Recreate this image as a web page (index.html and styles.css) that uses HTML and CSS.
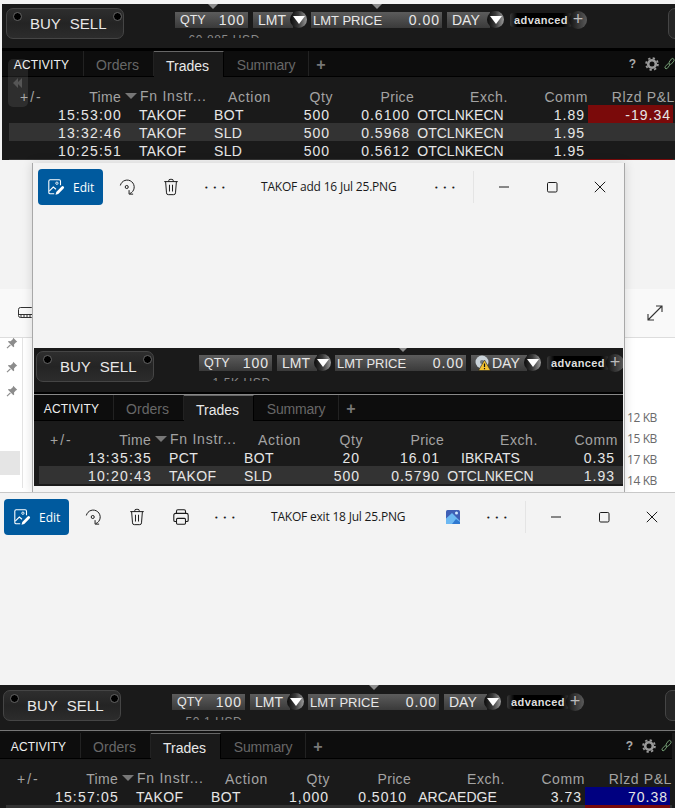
FILE: index.html
```html
<!DOCTYPE html>
<html lang="en">
<head>
<meta charset="utf-8">
<title>TAKOF trades</title>
<link rel="stylesheet" href="styles.css">
</head>
<body>
<svg class="defs" width="0" height="0" aria-hidden="true">
  <symbol id="i-edit" viewBox="0 0 20 20">
    <path d="M8 17.5H3.5a1.5 1.5 0 0 1-1.5-1.500V3.500A1.500 1.500 0 0 1 3.500 2h10A1.500 1.500 0 0 1 15 3.500V8" fill="none" stroke="currentColor" stroke-width="1.200"/>
    <path d="M2.500 14.500 7 10l3 2.500" fill="none" stroke="currentColor" stroke-width="1.200"/>
    <circle cx="11" cy="5.800" r="1.300" fill="none" stroke="currentColor" stroke-width="1"/>
    <path d="M9.500 18.500l.8-3 6-6a1.500 1.500 0 0 1 2.200 2.200l-6 6z" fill="currentColor"/>
  </symbol>
  <symbol id="i-rotate" viewBox="0 0 20 20">
    <path d="M2.600 8.300A7.800 7.800 0 1 1 13.200 17.300" fill="none" stroke="currentColor" stroke-width="1.100"/>
    <path d="M12.300 13.500v4.400h4.500" fill="none" stroke="currentColor" stroke-width="1.100"/>
    <circle cx="9.700" cy="10" r="1.700" fill="none" stroke="currentColor" stroke-width="1.100"/>
  </symbol>
  <symbol id="i-trash" viewBox="0 0 20 20">
    <path d="M2.500 4h15M7.500 4V3a1.500 1.500 0 0 1 1.500-1.500h2A1.500 1.500 0 0 1 12.500 3v1M4 4l1 12.500A2 2 0 0 0 7 18.500h6a2 2 0 0 0 2-2L16 4M8.300 7.500v7.500M11.700 7.500v7.500" fill="none" stroke="currentColor" stroke-width="1.100"/>
  </symbol>
  <symbol id="i-print" viewBox="0 0 20 20">
    <path d="M5 6V3.500A1.500 1.500 0 0 1 6.500 2h7A1.500 1.500 0 0 1 15 3.500V6M5 15H3.500A1.500 1.500 0 0 1 2 13.500V8a2 2 0 0 1 2-2h12a2 2 0 0 1 2 2v5.500a1.500 1.500 0 0 1-1.500 1.500H15" fill="none" stroke="currentColor" stroke-width="1.200"/>
    <rect x="5" y="11.500" width="10" height="6.500" rx="1.200" fill="none" stroke="currentColor" stroke-width="1.200"/>
  </symbol>
  <symbol id="i-min" viewBox="0 0 12 12"><path d="M1 6h10" stroke="currentColor" stroke-width="1"/></symbol>
  <symbol id="i-max" viewBox="0 0 12 12"><rect x="1.500" y="1.500" width="9.500" height="9.500" rx="1.200" fill="none" stroke="currentColor" stroke-width="1"/></symbol>
  <symbol id="i-close" viewBox="0 0 12 12"><path d="M.8.800l10.400 10.400M11.200.800.800 11.200" stroke="currentColor" stroke-width="1"/></symbol>
  <symbol id="i-gear" viewBox="0 0 14 14">
    <circle cx="7" cy="7" r="3.800" fill="none" stroke="#9a9a9a" stroke-width="2.600"/>
    <circle cx="7" cy="7" r="5.900" fill="none" stroke="#9a9a9a" stroke-width="1.800" stroke-dasharray="2.300 2.330"/>
  </symbol>
  <symbol id="i-link" viewBox="0 0 14 18">
    <path d="M1.500 12.500l2.500-3a2 2 0 0 1 3 0l.5.600-3.300 4.400a2 2 0 0 1-3-.4zM6.500 6.500l3-4a2 2 0 0 1 3 .4 2 2 0 0 1 0 2.400l-3 3.600a2 2 0 0 1-3-.4z" fill="none" stroke="#7fae7f" stroke-width="1.100"/>
  </symbol>
  <symbol id="i-pin" viewBox="0 0 12 12">
    <path d="M7.200.8 11.200 4.800 9.800 5.400 8 7.600 8.200 9.600 7.400 10.200 2 4.800 2.600 4 4.600 4.200 6.800 2.200z" fill="#8c8c8c"/>
    <path d="M4.400 7.800 1 11.200" stroke="#8c8c8c" stroke-width="1.200"/>
  </symbol>
</svg>

<main class="desk">
  <div class="backdrop">
    <div class="band band-grey"></div>
    <div class="band band-pale"></div>
    <div class="band band-white"></div>
  </div>

  <svg class="desk-icon keyboard" viewBox="0 0 16 12" aria-hidden="true"><rect x=".5" y=".5" width="15" height="10" rx="2" fill="none" stroke="#333"/><path d="M1 7.500h14M3 7.500v3M6 7.500v3M9 7.500v3M12 7.500v3" stroke="#333"/></svg>
  <svg class="desk-icon expand" viewBox="0 0 16 16" aria-hidden="true"><path d="M1 9v6h6M15 7V1H9M1 15 15 1" fill="none" stroke="#333" stroke-width="1.100"/></svg>
  <div class="side-line"></div>
  <div class="rule-line"></div>
  <svg class="pin pin-1"><use href="#i-pin"/></svg>
  <svg class="pin pin-2"><use href="#i-pin"/></svg>
  <svg class="pin pin-3"><use href="#i-pin"/></svg>
  <div class="selected-row"></div>
  <div class="sizes">
    <span>12 KB</span><span>15 KB</span><span>17 KB</span><span>14 KB</span>
  </div>

  <!-- Trading panel 1 -->
  <section class="panel panel-a">
    <div class="toolbar">
      <div class="buysell"><span class="dot"></span><span>BUY</span><span>SELL</span><span class="dot"></span></div>
      <div class="order">
        <div class="order-line">
          <div class="box box-qty"><span class="small">QTY</span><span class="num">100</span></div>
          <div class="box box-lmt">LMT<i class="drop"></i></div>
          <div class="box box-price"><span class="mid">LMT PRICE</span><span class="num">0.00</span></div>
          <div class="box box-day">DAY<i class="drop"></i></div>
          <div class="adv"><span>advanced</span><i class="adv-plus">+</i></div>
          <div class="side-btn"></div>
        </div>
        <div class="estimate"><span>~ 60,885 USD</span></div>
      </div>
      <i class="marker marker-1"></i><i class="marker marker-2"></i>
    </div>
    <div class="divider"></div>
    <div class="tabs">
      <div class="tab tab-title">ACTIVITY</div>
      <div class="tab tab-orders">Orders</div>
      <div class="tab tab-trades">Trades</div>
      <div class="tab tab-summary">Summary</div>
      <div class="tab tab-add">+</div>
      <div class="tools"><span class="help">?</span><svg class="gear"><use href="#i-gear"/></svg><svg class="link"><use href="#i-link"/></svg></div>
    </div>
    <div class="table">
      <div class="row head">
        <div class="c time"><span class="plusminus">+/-</span><span>Time</span></div>
        <div class="c fn"><i class="sort"></i>Fn Instr...</div>
        <div class="c act">Action</div><div class="c qty">Qty</div><div class="c price">Price</div>
        <div class="c exch">Exch.</div><div class="c comm">Comm</div><div class="c pnl">Rlzd P&amp;L</div>
      </div>
      <div class="row">
        <div class="c time"><span></span><span>15:53:00</span></div><div class="c fn">TAKOF</div><div class="c act">BOT</div><div class="c qty">500</div><div class="c price">0.6100</div><div class="c exch">OTCLNKECN</div><div class="c comm">1.89</div><div class="c pnl loss">-19.34</div>
      </div>
      <div class="row alt">
        <div class="c time"><span></span><span>13:32:46</span></div><div class="c fn">TAKOF</div><div class="c act">SLD</div><div class="c qty">500</div><div class="c price">0.5968</div><div class="c exch">OTCLNKECN</div><div class="c comm">1.95</div><div class="c pnl"></div>
      </div>
      <div class="row">
        <div class="c time"><span></span><span>10:25:51</span></div><div class="c fn">TAKOF</div><div class="c act">SLD</div><div class="c qty">500</div><div class="c price">0.5612</div><div class="c exch">OTCLNKECN</div><div class="c comm">1.95</div><div class="c pnl"></div>
      </div>
      <div class="row alt"><div class="c time"></div><div class="c fn"></div><div class="c act"></div><div class="c qty"></div><div class="c price"></div><div class="c exch"></div><div class="c comm"></div><div class="c pnl loss"></div></div>
    </div>
    <div class="collapse"><svg viewBox="0 0 10 12" aria-hidden="true"><path d="M6 1 1 6l5 5zM10 1 5 6l5 5z" fill="#555"/></svg></div>
  </section>

  <!-- Photos window 1 -->
  <section class="window window-a">
    <div class="win-bar">
      <button class="edit"><svg class="ico-edit"><use href="#i-edit"/></svg>Edit</button>
      <span class="ibtn"><svg class="ico"><use href="#i-rotate"/></svg></span>
      <span class="ibtn"><svg class="ico"><use href="#i-trash"/></svg></span>
      <span class="ibtn dots">&bull;&bull;&bull;</span>
      <span class="win-title">TAKOF add 16 Jul 25.PNG</span>
      <span class="ibtn dots">&bull;&bull;&bull;</span>
      <span class="win-sep"></span>
      <span class="cap"><svg class="ico-cap"><use href="#i-min"/></svg></span>
      <span class="cap"><svg class="ico-cap"><use href="#i-max"/></svg></span>
      <span class="cap"><svg class="ico-cap"><use href="#i-close"/></svg></span>
    </div>
  </section>

  <!-- Trading panel 2 -->
  <section class="panel panel-b">
    <div class="toolbar">
      <div class="buysell"><span class="dot"></span><span>BUY</span><span>SELL</span><span class="dot"></span></div>
      <div class="order">
        <div class="order-line">
          <div class="box box-qty"><span class="small">QTY</span><span class="num">100</span></div>
          <div class="box box-lmt">LMT<i class="drop"></i></div>
          <div class="box box-price"><span class="mid">LMT PRICE</span><span class="num">0.00</span></div>
          <div class="box box-day box-warn">
            <svg class="warn" viewBox="0 0 16 16" aria-hidden="true"><circle cx="7" cy="7" r="6.500" fill="#c9d2d8"/><circle cx="7" cy="7" r="2" fill="#6d7880"/><path d="M9.500 5 15.500 15.500H3.500z" fill="#f2c230" stroke="#222" stroke-width=".6"/><path d="M9.500 8.500v3.500M9.500 13v1.200" stroke="#111" stroke-width="1.200"/></svg>DAY<i class="drop"></i>
          </div>
          <div class="adv"><span>advanced</span><i class="adv-plus">+</i></div>
        </div>
        <div class="estimate"><span>~ 1.5K USD</span></div>
      </div>
      <i class="marker marker-2"></i>
    </div>
    <div class="divider"></div>
    <div class="tabs">
      <div class="tab tab-title">ACTIVITY</div>
      <div class="tab tab-orders">Orders</div>
      <div class="tab tab-trades">Trades</div>
      <div class="tab tab-summary">Summary</div>
      <div class="tab tab-add">+</div>
    </div>
    <div class="table">
      <div class="row head">
        <div class="c time"><span class="plusminus">+/-</span><span>Time</span></div>
        <div class="c fn"><i class="sort"></i>Fn Instr...</div>
        <div class="c act">Action</div><div class="c qty">Qty</div><div class="c price">Price</div>
        <div class="c exch">Exch.</div><div class="c comm">Comm</div><div class="c pnl"></div>
      </div>
      <div class="row">
        <div class="c time"><span></span><span>13:35:35</span></div><div class="c fn">PCT</div><div class="c act">BOT</div><div class="c qty">20</div><div class="c price">16.01</div><div class="c exch">IBKRATS</div><div class="c comm">0.35</div><div class="c pnl"></div>
      </div>
      <div class="row alt">
        <div class="c time"><span></span><span>10:20:43</span></div><div class="c fn">TAKOF</div><div class="c act">SLD</div><div class="c qty">500</div><div class="c price">0.5790</div><div class="c exch">OTCLNKECN</div><div class="c comm">1.93</div><div class="c pnl"></div>
      </div>
    </div>
  </section>

  <!-- Photos window 2 -->
  <section class="window window-b">
    <div class="win-bar">
      <button class="edit"><svg class="ico-edit"><use href="#i-edit"/></svg>Edit</button>
      <span class="ibtn"><svg class="ico"><use href="#i-rotate"/></svg></span>
      <span class="ibtn"><svg class="ico"><use href="#i-trash"/></svg></span>
      <span class="ibtn"><svg class="ico"><use href="#i-print"/></svg></span>
      <span class="ibtn dots">&bull;&bull;&bull;</span>
      <span class="win-title">TAKOF exit 18 Jul 25.PNG</span>
      <svg class="photo-badge" viewBox="0 0 14 14" aria-hidden="true">
        <rect width="14" height="14" rx="1.500" fill="#3f5fb5"/>
        <path d="M0 14V8.500L6 3l8 8v3z" fill="#6cb8f2"/>
        <path d="M6 14 10 9l4 3v2z" fill="#2f78d0"/>
        <circle cx="10.500" cy="3" r="1.500" fill="#cfe8ff"/>
      </svg>
      <span class="ibtn dots">&bull;&bull;&bull;</span>
      <span class="win-sep"></span>
      <span class="cap"><svg class="ico-cap"><use href="#i-min"/></svg></span>
      <span class="cap"><svg class="ico-cap"><use href="#i-max"/></svg></span>
      <span class="cap"><svg class="ico-cap"><use href="#i-close"/></svg></span>
    </div>
  </section>

  <!-- Trading panel 3 -->
  <section class="panel panel-c">
    <div class="toolbar">
      <div class="buysell"><span class="dot"></span><span>BUY</span><span>SELL</span><span class="dot"></span></div>
      <div class="order">
        <div class="order-line">
          <div class="box box-qty"><span class="small">QTY</span><span class="num">100</span></div>
          <div class="box box-lmt">LMT<i class="drop"></i></div>
          <div class="box box-price"><span class="mid">LMT PRICE</span><span class="num">0.00</span></div>
          <div class="box box-day">DAY<i class="drop"></i></div>
          <div class="adv"><span>advanced</span><i class="adv-plus">+</i></div>
          <div class="side-btn"></div>
        </div>
        <div class="estimate"><span>~ 50.1 USD</span></div>
      </div>
      <i class="marker marker-2"></i>
    </div>
    <div class="divider"></div>
    <div class="tabs">
      <div class="tab tab-title">ACTIVITY</div>
      <div class="tab tab-orders">Orders</div>
      <div class="tab tab-trades">Trades</div>
      <div class="tab tab-summary">Summary</div>
      <div class="tab tab-add">+</div>
      <div class="tools"><span class="help">?</span><svg class="gear"><use href="#i-gear"/></svg><svg class="link"><use href="#i-link"/></svg></div>
    </div>
    <div class="table">
      <div class="row head">
        <div class="c time"><span class="plusminus">+/-</span><span>Time</span></div>
        <div class="c fn"><i class="sort"></i>Fn Instr...</div>
        <div class="c act">Action</div><div class="c qty">Qty</div><div class="c price">Price</div>
        <div class="c exch">Exch.</div><div class="c comm">Comm</div><div class="c pnl">Rlzd P&amp;L</div>
      </div>
      <div class="row">
        <div class="c time"><span></span><span>15:57:05</span></div><div class="c fn">TAKOF</div><div class="c act">BOT</div><div class="c qty">1,000</div><div class="c price">0.5010</div><div class="c exch">ARCAEDGE</div><div class="c comm">3.73</div><div class="c pnl gain">70.38</div>
      </div>
      <div class="row alt"><div class="c time"></div><div class="c fn"></div><div class="c act"></div><div class="c qty"></div><div class="c price"></div><div class="c exch"></div><div class="c comm"></div><div class="c pnl loss"></div></div>
    </div>
  </section>
</main>
</body>
</html>
```

FILE: styles.css
```css
* { box-sizing: border-box; }
html, body { margin: 0; padding: 0; }
body { background: #f3f3f3; font-family: "Liberation Sans", Arial, sans-serif; }
.defs { position: absolute; }

.desk { position: relative; width: 675px; height: 811px; overflow: hidden; background: #f3f3f3; }

/* Backdrop desktop */
.backdrop { position: absolute; inset: 0; display: flex; flex-direction: column; }
.band-grey { height: 289px; background: #f3f3f3; }
.band-pale { height: 48px; background: #f9f9f9; }
.band-white { flex: 1; background: #fff; }
.rule-line { position: absolute; left: 0; top: 337px; width: 675px; height: 1px; background: #ddd; }
.side-line { position: absolute; left: 22px; top: 338px; width: 1px; height: 150px; background: #e4e4e4; }
.desk-icon { position: absolute; }
.keyboard { left: 18px; top: 307px; width: 16px; height: 12px; }
.expand { left: 647px; top: 305px; width: 16px; height: 16px; }
.pin { position: absolute; left: 6px; width: 12px; height: 12px; }
.pin-1 { top: 337px; }
.pin-2 { top: 361px; }
.pin-3 { top: 385px; }
.selected-row { position: absolute; left: 0; top: 451px; width: 20px; height: 24px; background: #e5e5e5; }
.sizes { position: absolute; left: 627px; top: 407px; display: flex; flex-direction: column; font: 12px/21px "Open Sans", sans-serif; color: #6a6a6a; letter-spacing: -.4px; }

/* Trading panels */
.panel { position: absolute; overflow: hidden; background: #1a1a1a; color: #e6e6e6; font-size: 14px; }
.panel-a { left: 2px; top: 4px; width: 673px; height: 156px; }
.panel-b { left: 34px; top: 348px; width: 589px; height: 138px; }
.panel-c { left: 0; top: 685px; width: 675px; height: 123px; }
.panel-b > * { margin-left: -2px; }
.panel-c > * { margin-left: -1px; }

.toolbar { position: relative; display: flex; align-items: flex-start; height: 44px; padding: 4px 0 0 4px; }
.panel-b .toolbar { height: 44px; padding-top: 3px; }
.panel-c .toolbar { height: 45px; padding-top: 5px; }

.buysell { flex: none; display: flex; align-items: center; width: 118px; height: 31px; padding: 0 0 0 6px; border: 1px solid #454545; border-radius: 7px; background: linear-gradient(#2e2e2e, #242424 50%, #2c2c2c); font-size: 15px; color: #e8e8e8; }
.buysell span:nth-child(2) { margin-left: 8px; }
.buysell span:nth-child(3) { margin-left: 9px; }
.buysell .dot { flex: none; width: 9px; height: 9px; margin-top: -14px; border-radius: 50%; background: #000; border: 1px solid #666; }
.buysell .dot:last-child { margin-left: 6px; }

.order { flex: none; margin-left: 51px; margin-top: 4px; }
.panel-b .order { margin-left: 45px; }
.order-line { display: flex; align-items: flex-start; height: 16px; }
.box { position: relative; display: flex; align-items: center; height: 16px; background: linear-gradient(#5c5c5c, #3a3a3a); color: #e8e8e8; white-space: nowrap; }
.small { font-size: 12.500px; }
.mid { font-size: 13px; }
.num { letter-spacing: 1px; }
.box-qty { width: 73px; padding: 0 3px 0 5px; justify-content: space-between; }
.box-lmt { width: 40px; margin-left: 5px; padding-left: 5px; }
.box-price { width: 131px; margin-left: 18px; padding: 0 2px; justify-content: space-between; }
.box-day { width: 43px; margin-left: 5px; padding-left: 5px; }
.box-warn { width: 56px; padding-left: 4px; }
.warn { width: 16px; height: 16px; flex: none; margin-right: 1px; }
.drop { position: absolute; right: -14px; top: -1px; width: 17px; height: 17px; border-radius: 50%; background: linear-gradient(90deg, #0c0c0c, #3a3a3a 50%, #9a9a9a); }
.drop::after { content: ""; position: absolute; left: 3px; top: 5px; border-left: 6px solid transparent; border-right: 6px solid transparent; border-top: 8px solid #fff; }
.adv { position: relative; display: flex; align-items: center; width: 62px; height: 14px; margin-top: 1px; margin-left: 20px; padding-left: 4px; border-radius: 3px; background: linear-gradient(90deg, #3a3a3a, #000 12%, #000 85%, #333); color: #ddd; font-size: 11px; font-weight: 700; letter-spacing: .4px; }
.adv-plus { position: absolute; right: -15px; top: -2px; width: 18px; height: 18px; border-radius: 50%; background: linear-gradient(90deg, #111, #5a5a5a); color: #bbb; font: 400 18px/17px "Liberation Sans", sans-serif; letter-spacing: 0; text-align: center; }
.side-btn { flex: none; width: 30px; height: 31px; margin: -4px 0 0 96px; border: 1px solid #454545; border-radius: 7px; background: #262626; }
.estimate { height: 5px; margin-top: 5px; padding-left: 2px; overflow: hidden; color: #8a8a8a; font-size: 12px; line-height: 14px; letter-spacing: .6px; }
.estimate span { display: block; margin-top: 0; }

.marker { position: absolute; top: 0; width: 0; height: 0; border-left: 5px solid transparent; border-right: 5px solid transparent; border-top: 5px solid #8c8c8c; }
.marker-1 { left: 206px; }
.marker-2 { left: 370px; }
.panel-b .marker-2 { left: 366px; top: -1px; }

.divider { height: 3px; background: #000; border-top: 1px solid #000; }
.panel-b .divider { height: 3px; border-bottom: 1px solid #888; }
.panel-c .divider { border-top: 1px solid #777; background: #111; }

.tabs { display: flex; height: 26px; background: #0d0d0d; border-bottom: 1px solid #000; width: 673px; }
.tab { display: flex; align-items: center; justify-content: center; height: 25px; padding: 2px 2px 0 0; border-right: 1px solid #222; color: #676767; }
.tab-title { width: 82px; color: #f0f0f0; font-size: 12px; letter-spacing: .2px; }
.tab-orders { width: 70px; }
.tab-trades { width: 70px; height: 26px; margin-bottom: -1px; background: #1a1a1a; color: #e8e8e8; border-top: 1px solid #666; border-right: 1px solid #000; }
.tab-summary { width: 85px; padding-right: 0; letter-spacing: -.2px; }
.tab-add { width: 24px; padding-right: 0; border-right: 0; font-weight: 700; font-size: 16px; color: #777; }
.tools { display: flex; align-items: center; height: 25px; margin-left: auto; }
.help { color: #aaa; font-size: 12px; font-weight: 700; margin-right: 9px; }
.gear { width: 14px; height: 14px; margin-right: 5px; }
.link { width: 11px; height: 16px; }

.table { padding-top: 10px; width: 673px; }
.panel-b .table { padding-top: 9px; }
.row { display: grid; grid-template-columns: 121px 91px 78px 41px 80px 95px 80px 85px 2px; height: 18px; line-height: 20px; letter-spacing: .35px; white-space: nowrap; }
.row.alt { background: #333; margin-left: 7px; padding-left: 0; grid-template-columns: 114px 91px 78px 41px 80px 95px 80px 85px 2px; }
.c { min-width: 0; height: 18px; }
.time { display: flex; justify-content: space-between; padding-right: 1px; letter-spacing: 1.200px; }
.head .time { padding-left: 18px; padding-right: 2px; letter-spacing: .3px; }
.plusminus { letter-spacing: 2px; }
.fn { padding-left: 16px; }
.head .fn { display: flex; align-items: center; padding-left: 2px; letter-spacing: .75px; }
.sort { flex: none; width: 0; height: 0; margin-right: 3px; border-left: 6px solid transparent; border-right: 6px solid transparent; border-top: 6px solid #777; }
.act { padding-left: 0; }
.head .act { padding-left: 14px; letter-spacing: .7px; }
.qty, .price, .comm, .pnl { text-align: right; padding-right: 3px; letter-spacing: 1px; }
.exch { text-align: center; letter-spacing: 0; }
.head .exch { text-align: right; padding-right: 0; letter-spacing: .6px; }
.head .qty, .head .comm { padding-right: 0; letter-spacing: .6px; }
.head .price { padding-right: 0; margin-right: -1px; letter-spacing: .3px; }
.head .pnl { padding-right: 0; margin-right: -2px; letter-spacing: .6px; }
.head { color: #a3a3a3; }
.pnl { padding-right: 2px; }
.loss { background: #7a0a0a; }
.gain { background: #000080; }

.collapse { position: absolute; left: 6px; top: 55px; display: flex; align-items: center; justify-content: center; width: 20px; height: 48px; border-radius: 5px; background: rgba(255,255,255,.09); }
.collapse svg { width: 10px; height: 12px; margin-right: 2px; }

/* Photo windows */
.window { position: absolute; background: #f3f3f3; color: #1a1a1a; }
.window-a { left: 32px; top: 163px; width: 593px; height: 329px; border-left: 1px solid #a8a8a8; border-right: 1px solid #a8a8a8; box-shadow: 0 0 10px rgba(0,0,0,.14); }
.window-b { left: 0; top: 492px; width: 676px; height: 193px; border-top: 1px solid #c8c8c8; }
.win-bar { display: flex; align-items: flex-start; padding: 6px 0 0 5px; }
.window-b .win-bar { padding-left: 4px; }
.edit { flex: none; display: flex; align-items: center; width: 65px; height: 36px; margin: 0 2px 0 0; padding: 0 0 0 9px; border: 0; border-radius: 4px; background: #005a9e; color: #fff; font: 12px "Open Sans", sans-serif; }
.ico-edit { width: 18px; height: 18px; margin-right: 8px; }
.ibtn { flex: none; display: flex; align-items: center; justify-content: center; width: 44px; height: 36px; }
.ico { width: 18px; height: 18px; }
.dots { font: 7px/36px "DejaVu Sans", sans-serif; letter-spacing: 4.400px; padding-left: 4px; padding-top: 2px; }
.win-title { flex: 1; height: 36px; margin-left: 24px; font: 12px/36px "Open Sans", sans-serif; letter-spacing: -.2px; white-space: nowrap; }
.win-sep { flex: none; width: 1px; height: 32px; margin: 2px 6px 0; background: #e4e4e4; }
.cap { flex: none; display: flex; align-items: center; justify-content: center; width: 48px; height: 36px; }
.ico-cap { width: 12px; height: 12px; }
.photo-badge { flex: none; width: 14px; height: 14px; margin: 11px 15px 0 0; }
```
